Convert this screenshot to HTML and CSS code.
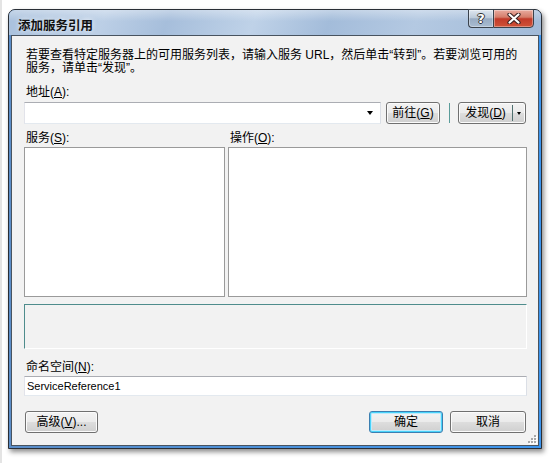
FILE: index.html
```html
<!DOCTYPE html>
<html lang="zh-CN">
<head>
<meta charset="utf-8">
<title>添加服务引用</title>
<link rel="stylesheet" href="styles.css">
</head>
<body>
<div class="window">
  <div class="titlebar">
    <span class="title">添加服务引用</span>
    <div class="caption-btns">
      <div class="cap-btn help"><span class="qmark">?</span></div>
      <div class="cap-btn close">
        <svg width="14" height="11" viewBox="0 0 14 11">
          <path d="M2.5 1.5 L11.5 9.5 M11.5 1.5 L2.5 9.5" stroke="#3a2020" stroke-width="4.2" stroke-linecap="round"/>
          <path d="M2.5 1.5 L11.5 9.5 M11.5 1.5 L2.5 9.5" stroke="#ffffff" stroke-width="2.2" stroke-linecap="round"/>
        </svg>
      </div>
    </div>
  </div>
  <div class="frame">
    <div class="client">
      <p class="intro"><span class="line">若要查看特定服务器上的可用服务列表，请输入服务 URL，然后单击“转到”。若要浏览可用的</span><span class="line">服务，请单击“发现”。</span></p>
      <div class="label lbl-addr">地址(<u>A</u>):</div>
      <div class="addr-row">
        <div class="combo"><span class="combo-arrow"></span></div>
        <div class="btn go">前往(<u>G</u>)</div>
        <div class="vsep"></div>
        <div class="btn split"><span class="split-main">发现(<u>D</u>)</span><span class="split-div"></span><span class="split-arrow"></span></div>
      </div>
      <div class="lists-labels">
        <div class="label svc-lbl">服务(<u>S</u>):</div>
        <div class="label op-lbl">操作(<u>O</u>):</div>
      </div>
      <div class="lists">
        <div class="listbox svc"></div>
        <div class="listbox ops"></div>
      </div>
      <div class="desc"></div>
      <div class="label ns-lbl">命名空间(<u>N</u>):</div>
      <div class="textbox">ServiceReference1</div>
      <div class="btn-row">
        <div class="btn adv">高级(<u>V</u>)...</div>
        <div class="btn ok default">确定</div>
        <div class="btn cancel">取消</div>
      </div>
    </div>
    <svg class="grip" width="9" height="9" viewBox="0 0 9 9">
      <g fill="#ffffff">
        <rect x="7" y="1" width="2" height="2"/>
        <rect x="4" y="4" width="2" height="2"/><rect x="7" y="4" width="2" height="2"/>
        <rect x="1" y="7" width="2" height="2"/><rect x="4" y="7" width="2" height="2"/><rect x="7" y="7" width="2" height="2"/>
      </g>
      <g fill="#a8a8a8">
        <rect x="6" y="0" width="2" height="2"/>
        <rect x="3" y="3" width="2" height="2"/><rect x="6" y="3" width="2" height="2"/>
        <rect x="0" y="6" width="2" height="2"/><rect x="3" y="6" width="2" height="2"/><rect x="6" y="6" width="2" height="2"/>
      </g>
    </svg>
  </div>
</div>
</body>
</html>
```

FILE: styles.css
```css
* { box-sizing: border-box; }
html, body { margin: 0; }
body {
  background: #ffffff;
  padding: 9px 0 0 8px;
  font-family: "Liberation Sans", "Noto Sans CJK SC", sans-serif;
  font-size: 12px;
  color: #000;
  min-height: 463px;
  border-left: 2px solid #e4e4e4;
}
.window {
  width: 534px;
  margin-left: -2px;
  border: 1px solid #2a2f36;
  border-radius: 7px 7px 0 0;
  box-shadow: 2px 3px 5px rgba(0,0,0,0.45);
  background: #6b9ad0;
}
.titlebar {
  display: flex;
  align-items: flex-start;
  height: 25px;
  border-radius: 6px 6px 0 0;
  background:
    linear-gradient(to bottom, rgba(255,255,255,0.35), rgba(255,255,255,0) 45%),
    linear-gradient(110deg, #a9c1dd 0%, #bccfe6 18%, #a6bedb 30%, #bfd2e8 46%, #a3bcda 60%, #b4c9e2 76%, #a1bad8 100%);
}
.title {
  padding: 5px 0 0 9px;
  line-height: 20px;
  font-family: "Noto Sans CJK SC", sans-serif;
  font-weight: bold;
  font-size: 12.5px;
  color: #111;
  text-shadow: 0 0 5px rgba(255,255,255,0.9);
}
.caption-btns {
  display: flex;
  margin: -1px 7px 0 auto;
  height: 19px;
}
.cap-btn {
  height: 19px;
  border: 1px solid #3a424c;
  display: flex;
  align-items: center;
  justify-content: center;
  box-shadow: inset 0 0 0 1px rgba(255,255,255,0.35);
}
.help {
  width: 25px;
  border-right: none;
  border-radius: 0 0 0 4px;
  background: linear-gradient(#dfe7f0, #bccad9 45%, #98abc2 52%, #a9bcd1);
}
.qmark {
  font-family: "DejaVu Sans", sans-serif;
  font-weight: bold;
  font-size: 13px;
  line-height: 13px;
  color: #fff;
  text-shadow: 1px 0 0 #333, -1px 0 0 #333, 0 1px 0 #333, 0 -1px 0 #333;
}
.close {
  width: 41px;
  border-radius: 0 0 4px 0;
  background: linear-gradient(#e9ab9f, #d57d6b 42%, #c23a2a 52%, #cf5238);
}
.frame {
  position: relative;
  padding: 0 2px 2px;
  background: linear-gradient(to right, #5b8dc8, #3c95ee);
}
.client {
  border: 1px solid #48535f;
  background: #f2f2f2;
  padding: 13px 11px 12px 12px;
}
.intro {
  margin: 0 0 0 2px;
  display: flex;
  flex-direction: column;
  gap: 1px;
  white-space: nowrap;
}
.line {
  display: block;
  height: 12px;
  line-height: 12px;
}
.label {
  height: 12px;
  line-height: 12px;
  padding-left: 2px;
  white-space: nowrap;
}
.lbl-addr { margin: 12px 0 4px; }
.addr-row {
  display: flex;
  height: 22px;
}
.combo {
  width: 357px;
  margin-right: 5px;
  background: #fff;
  border: 1px solid;
  border-color: #abadb3 #dbdfe6 #e3e9ef #e2e3ea;
  display: flex;
  align-items: center;
  justify-content: flex-end;
  padding-right: 7px;
}
.combo-arrow {
  width: 0;
  height: 0;
  border-left: 3px solid transparent;
  border-right: 3px solid transparent;
  border-top: 4px solid #000;
}
.btn {
  height: 22px;
  border: 1px solid #707070;
  border-radius: 3px;
  background: linear-gradient(#f3f3f3, #ebebeb 48%, #dddddd 52%, #cfcfcf);
  box-shadow: inset 0 0 0 1px #fbfbfb;
  display: flex;
  align-items: center;
  justify-content: center;
  line-height: 12px;
  white-space: nowrap;
}
.go { width: 54px; }
.vsep {
  width: 1px;
  height: 20px;
  margin: 1px 8px 0 9px;
  background: #5a9c9a;
}
.split {
  width: 68px;
  justify-content: flex-start;
}
.split-main {
  width: 53px;
  text-align: center;
}
.split-div {
  width: 1px;
  height: 16px;
  background: #4f6f6f;
}
.split-arrow {
  margin-left: 4px;
  width: 0;
  height: 0;
  border-left: 2px solid transparent;
  border-right: 2px solid transparent;
  border-top: 3px solid #000;
}
.lists-labels {
  display: flex;
  margin: 8px 0 3px;
}
.svc-lbl { width: 204px; }
.lists {
  display: flex;
  height: 150px;
}
.listbox {
  background: #fff;
  border: 1px solid #9a9a9a;
}
.svc { width: 201px; margin-right: 3px; }
.ops { flex: 1; }
.desc {
  margin-top: 7px;
  height: 45px;
  border: 1px solid;
  border-color: #4e8c8c #ffffff #ffffff #4e8c8c;
}
.ns-lbl { margin: 12px 0 3px; }
.textbox {
  height: 20px;
  background: #fff;
  border: 1px solid;
  border-color: #abadb3 #dbdfe6 #e3e9ef #e2e3ea;
  padding-left: 2px;
  font-size: 11px;
  line-height: 18px;
}
.btn-row {
  display: flex;
  margin-top: 15px;
}
.adv { width: 73px; margin-left: 1px; }
.ok { width: 74px; margin-left: auto; margin-right: 7px; }
.cancel { width: 76px; margin-right: 1px; }
.default {
  border-color: #3c7fb1;
  box-shadow: inset 0 0 0 1px #48d3fa, inset 0 0 0 2px #bfeafb;
}
.grip {
  position: absolute;
  right: 4px;
  bottom: 4px;
}
```
